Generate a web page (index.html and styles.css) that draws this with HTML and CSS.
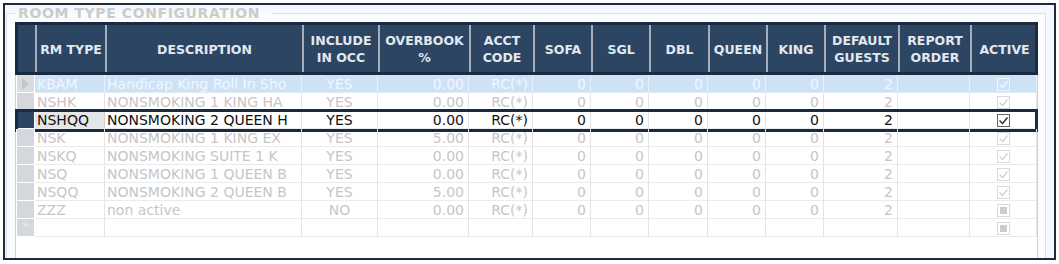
FILE: index.html
```html
<!DOCTYPE html>
<html lang="en">
<head>
  <meta charset="UTF-8">
  <title>Room Type Configuration</title>
  <link rel="stylesheet" href="styles.css">
</head>
<body>
  <div class="panel">
    <fieldset class="group">
      <legend>ROOM TYPE CONFIGURATION</legend>
      <div class="grid">
        <div class="row head">
          <div class="hc"></div>
          <div class="hc">RM TYPE</div>
          <div class="hc">DESCRIPTION</div>
          <div class="hc">INCLUDE<br>IN OCC</div>
          <div class="hc">OVERBOOK<br>%</div>
          <div class="hc">ACCT<br>CODE</div>
          <div class="hc">SOFA</div>
          <div class="hc">SGL</div>
          <div class="hc">DBL</div>
          <div class="hc">QUEEN</div>
          <div class="hc">KING</div>
          <div class="hc">DEFAULT<br>GUESTS</div>
          <div class="hc">REPORT<br>ORDER</div>
          <div class="hc">ACTIVE</div>
        </div>

        <div class="row cur">
          <div class="rh"><span class="arrow"></span></div>
          <div class="l">KBAM</div>
          <div class="l">Handicap King Roll In Sho</div>
          <div class="c">YES</div>
          <div class="r">0.00</div>
          <div class="r">RC(*)</div>
          <div class="r">0</div><div class="r">0</div><div class="r">0</div><div class="r">0</div><div class="r">0</div>
          <div class="r">2</div>
          <div class="r"></div>
          <div class="c"><svg class="cb" width="13" height="13" viewBox="0 0 13 13"><rect x=".5" y=".5" width="12" height="12"/><path d="M2.5 6.5l3 3 5-6"/></svg></div>
        </div>

        <div class="row">
          <div class="rh"></div>
          <div class="l">NSHK</div>
          <div class="l">NONSMOKING 1 KING HA</div>
          <div class="c">YES</div>
          <div class="r">0.00</div>
          <div class="r">RC(*)</div>
          <div class="r">0</div><div class="r">0</div><div class="r">0</div><div class="r">0</div><div class="r">0</div>
          <div class="r">2</div>
          <div class="r"></div>
          <div class="c"><svg class="cb" width="13" height="13" viewBox="0 0 13 13"><rect x=".5" y=".5" width="12" height="12"/><path d="M2.5 6.5l3 3 5-6"/></svg></div>
        </div>

        <div class="row sel">
          <div class="rh"></div>
          <div class="l key">NSHQQ</div>
          <div class="l">NONSMOKING 2 QUEEN H</div>
          <div class="c">YES</div>
          <div class="r">0.00</div>
          <div class="r">RC(*)</div>
          <div class="r">0</div><div class="r">0</div><div class="r">0</div><div class="r">0</div><div class="r">0</div>
          <div class="r">2</div>
          <div class="r"></div>
          <div class="c"><svg class="cb" width="13" height="13" viewBox="0 0 13 13"><rect x=".5" y=".5" width="12" height="12"/><path d="M2.5 6.5l3 3 5-6"/></svg></div>
        </div>

        <div class="row">
          <div class="rh"></div>
          <div class="l">NSK</div>
          <div class="l">NONSMOKING 1 KING EX</div>
          <div class="c">YES</div>
          <div class="r">5.00</div>
          <div class="r">RC(*)</div>
          <div class="r">0</div><div class="r">0</div><div class="r">0</div><div class="r">0</div><div class="r">0</div>
          <div class="r">2</div>
          <div class="r"></div>
          <div class="c"><svg class="cb" width="13" height="13" viewBox="0 0 13 13"><rect x=".5" y=".5" width="12" height="12"/><path d="M2.5 6.5l3 3 5-6"/></svg></div>
        </div>

        <div class="row">
          <div class="rh"></div>
          <div class="l">NSKQ</div>
          <div class="l">NONSMOKING SUITE 1 K</div>
          <div class="c">YES</div>
          <div class="r">0.00</div>
          <div class="r">RC(*)</div>
          <div class="r">0</div><div class="r">0</div><div class="r">0</div><div class="r">0</div><div class="r">0</div>
          <div class="r">2</div>
          <div class="r"></div>
          <div class="c"><svg class="cb" width="13" height="13" viewBox="0 0 13 13"><rect x=".5" y=".5" width="12" height="12"/><path d="M2.5 6.5l3 3 5-6"/></svg></div>
        </div>

        <div class="row">
          <div class="rh"></div>
          <div class="l">NSQ</div>
          <div class="l">NONSMOKING 1 QUEEN B</div>
          <div class="c">YES</div>
          <div class="r">0.00</div>
          <div class="r">RC(*)</div>
          <div class="r">0</div><div class="r">0</div><div class="r">0</div><div class="r">0</div><div class="r">0</div>
          <div class="r">2</div>
          <div class="r"></div>
          <div class="c"><svg class="cb" width="13" height="13" viewBox="0 0 13 13"><rect x=".5" y=".5" width="12" height="12"/><path d="M2.5 6.5l3 3 5-6"/></svg></div>
        </div>

        <div class="row">
          <div class="rh"></div>
          <div class="l">NSQQ</div>
          <div class="l">NONSMOKING 2 QUEEN B</div>
          <div class="c">YES</div>
          <div class="r">5.00</div>
          <div class="r">RC(*)</div>
          <div class="r">0</div><div class="r">0</div><div class="r">0</div><div class="r">0</div><div class="r">0</div>
          <div class="r">2</div>
          <div class="r"></div>
          <div class="c"><svg class="cb" width="13" height="13" viewBox="0 0 13 13"><rect x=".5" y=".5" width="12" height="12"/><path d="M2.5 6.5l3 3 5-6"/></svg></div>
        </div>

        <div class="row">
          <div class="rh"></div>
          <div class="l">ZZZ</div>
          <div class="l">non active</div>
          <div class="c">NO</div>
          <div class="r">0.00</div>
          <div class="r">RC(*)</div>
          <div class="r">0</div><div class="r">0</div><div class="r">0</div><div class="r">0</div><div class="r">0</div>
          <div class="r">2</div>
          <div class="r"></div>
          <div class="c"><svg class="cb" width="13" height="13" viewBox="0 0 13 13"><rect x=".5" y=".5" width="12" height="12"/><rect class="mark" x="3" y="3" width="7" height="7"/></svg></div>
        </div>

        <div class="row">
          <div class="rh star">*</div>
          <div class="l"></div>
          <div class="l"></div>
          <div class="c"></div>
          <div class="r"></div>
          <div class="r"></div>
          <div class="r"></div><div class="r"></div><div class="r"></div><div class="r"></div><div class="r"></div>
          <div class="r"></div>
          <div class="r"></div>
          <div class="c"><svg class="cb" width="13" height="13" viewBox="0 0 13 13"><rect x=".5" y=".5" width="12" height="12"/><rect class="mark" x="3" y="3" width="7" height="7"/></svg></div>
        </div>
      </div>
    </fieldset>
  </div>
</body>
</html>
```

FILE: styles.css
```css
body {
  margin: 0;
  font-family: "DejaVu Sans", Verdana, sans-serif;
  background: #fff;
}

.panel {
  margin: 3px 0 0 3px;
  width: 1053px;
  height: 257px;
  box-sizing: border-box;
  border: 2px solid #1d2b40;
  background: #f5f8fc;
  overflow: hidden;
}

.group {
  margin: 0 8px 0 1px;
  padding: 1px 7px 0 8px;
  border: 1px solid #d9e1ea;
  background: #fbfcfe;
  min-width: 0;
  height: 300px;
}

.group legend {
  padding: 0 12px 0 3px;
  font-size: 14px;
  font-weight: bold;
  letter-spacing: 0.6px;
  line-height: 16px;
  color: #cbcbcb;
}

.grid {
  height: 240px;
  border-left: 1px solid #cdd2d8;
  border-right: 1px solid #cdd2d8;
  background: #fff;
}

.row {
  position: relative;
  display: grid;
  grid-template-columns: 19px 70px 197px 76px 91px 64px 58px 58px 59px 58px 58px 74px 72px 67px;
  height: 18px;
  font-size: 14px;
  color: #c6c6c6;
}

.row > div {
  box-sizing: border-box;
  border-right: 1px solid #e4e4e4;
  border-bottom: 1px solid #ebebeb;
  padding-top: 1px;
  line-height: 16px;
  white-space: nowrap;
  overflow: hidden;
}

.row .l {
  padding-left: 2px;
}

.row .r {
  padding-right: 4px;
  text-align: right;
}

.row .c {
  display: flex;
  align-items: center;
  justify-content: center;
}

.row .rh {
  padding-top: 0;
  background: #d4d8de;
  border-left: 1px solid #fff;
  border-right: 1px solid #fff;
  border-bottom: 1px solid #fff;
}

.row .star {
  font-size: 13px;
  text-align: center;
  color: #e6e8eb;
}

/* header */
.head {
  height: 53px;
  background: #2c4563;
  color: #e2e8ef;
  font-size: 12.5px;
  font-weight: bold;
}

.head > .hc {
  display: flex;
  align-items: center;
  justify-content: center;
  text-align: center;
  padding-top: 1px;
  line-height: 17px;
  border: none;
  border-left: 2px solid #a6afb9;
}

.head > .hc:first-child {
  border-left: none;
}

.head::after,
.sel::after {
  content: '';
  position: absolute;
  top: 0;
  left: -1px;
  right: -1px;
  bottom: 0;
  border: 3px solid #1b2a40;
  pointer-events: none;
}

/* current (focused) row */
.cur > div {
  background: #cee2f6;
  color: #f2f7fd;
  border-right-color: #e8f1fa;
  border-bottom-color: #dfebf8;
}

.cur .rh {
  background: #d9dce1;
  display: flex;
  align-items: center;
  justify-content: center;
}

.arrow {
  width: 0;
  height: 0;
  border-top: 6px solid transparent;
  border-bottom: 6px solid transparent;
  border-left: 7px solid #c3c6cb;
}

/* selected row */
.sel {
  color: #111;
}

.sel::after {
  top: -2px;
  bottom: -3px;
}

.sel .rh {
  background: #2c4563;
}

.sel .key {
  background: #e6e6e6;
  border-right-color: #cfcfcf;
}

/* checkboxes */
.cb rect {
  fill: #fff;
  stroke: #dadada;
}

.cb path {
  fill: none;
  stroke: #d0d0d0;
  stroke-width: 1.2;
}

.cb .mark {
  fill: #cdcdcd;
  stroke: none;
}

.cur .cb rect {
  fill: none;
  stroke: #eef4fb;
}

.cur .cb path {
  stroke: #f4f8fd;
}

.sel .cb rect {
  stroke: #666;
}

.sel .cb path {
  stroke: #2a2a2a;
  stroke-width: 1.4;
}
```
